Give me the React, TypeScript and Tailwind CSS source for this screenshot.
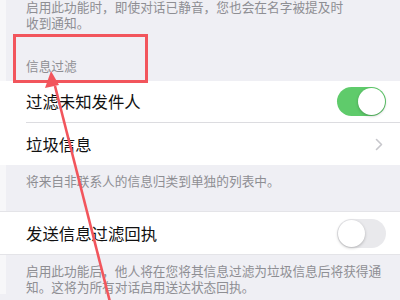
import React from 'react';

const Toggle: React.FC<{ on: boolean }> = ({ on }) => (
  <div
    className={`relative w-[49px] h-[29px] rounded-full ${on ? 'bg-[#5fcb6b]' : 'bg-[#e9e9ec]'}`}
  >
    <div
      className={`absolute top-[1px] w-[27px] h-[27px] rounded-full bg-white shadow-[0_1px_3px_rgba(0,0,0,0.25)] ${on ? 'left-[21px]' : 'left-[1px]'}`}
    />
  </div>
);

const Chevron = () => (
  <svg width="8" height="13" viewBox="0 0 8 13" className="mr-[3px]">
    <path d="M1.5 1.5 L6.5 6.5 L1.5 11.5" fill="none" stroke="#c7c7cc" strokeWidth="1.6" strokeLinecap="round" strokeLinejoin="round" />
  </svg>
);

const Row: React.FC<{ label: string; right: React.ReactNode; divider?: boolean }> = ({ label, right, divider }) => (
  <div className="h-[42px] flex items-center pl-[26px]">
    <div className={`flex-1 h-full flex items-center pr-[14px] ${divider ? 'border-b border-[#dcdce0]' : ''}`}>
      <span className="flex-1 text-[16.4px] text-[#111] leading-none">{label}</span>
      {right}
    </div>
  </div>
);

const Footer: React.FC<{ children: React.ReactNode; className?: string }> = ({ children, className }) => (
  <div className={`border-l-[6px] border-[#f7f7f9] pl-[20px] pr-[12px] text-[12.7px] leading-[15.5px] text-[#8e8e93] ${className ?? ''}`}>
    {children}
  </div>
);

export default function App() {
  return (
    <div
      className="relative w-[400px] h-[300px] overflow-hidden bg-[#efeff4]"
      style={{ fontFamily: '"Noto Sans CJK SC", "Noto Sans", sans-serif' }}
    >
      <Footer className="h-[56px]">
        <div className="-mt-[1px]">启用此功能时，即使对话已静音，您也会在名字被提及时</div>
        <div>收到通知。</div>
      </Footer>
      <Footer className="h-[26px] text-[12.5px]">
        <div className="pt-[3px]">信息过滤</div>
      </Footer>

      <div className="bg-white">
        <Row label="过滤未知发件人" right={<Toggle on />} divider />
        <Row label="垃圾信息" right={<Chevron />} />
      </div>

      <Footer className="h-[46px]">
        <div className="pt-[8px]">将来自非联系人的信息归类到单独的列表中。</div>
      </Footer>

      <div className="bg-white border-y border-[#e4e4e8]">
        <Row label="发送信息过滤回执" right={<Toggle on={false} />} />
      </div>

      <Footer className="pt-[8px]">
        <div>启用此功能后，他人将在您将其信息过滤为垃圾信息后将获得通</div>
        <div>知。这将为所有对话启用送达状态回执。</div>
      </Footer>

      {/* annotation overlay */}
      <div className="absolute left-[13px] top-[34px] w-[135px] h-[49px] border-[3px] border-[#f2555c]" />
      <svg className="absolute left-0 top-0" width="400" height="300" viewBox="0 0 400 300">
        <line x1="55" y1="86" x2="110" y2="302" stroke="#f2555c" strokeWidth="2.6" />
        <polygon points="51,71 45,88 59,85" fill="#f2555c" />
      </svg>
    </div>
  );
}
